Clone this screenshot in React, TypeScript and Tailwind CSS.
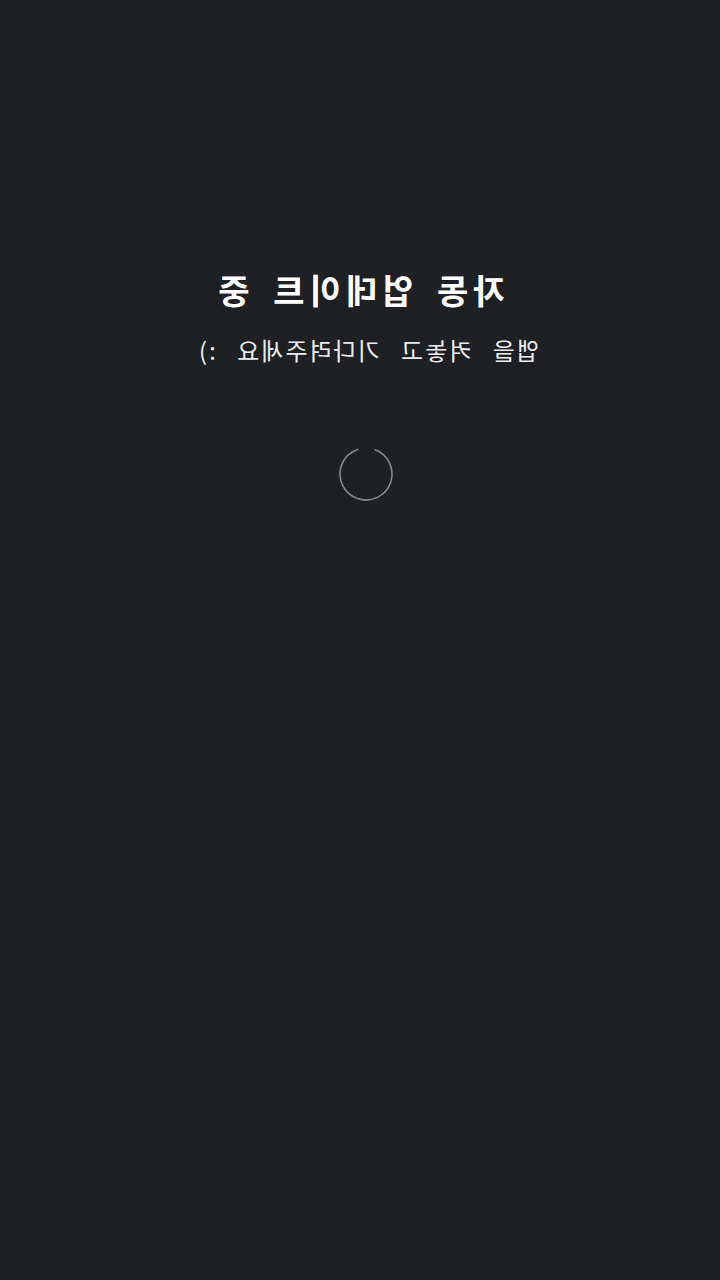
export default function App() {
  return (
    <div
      className="flex min-h-[1280px] w-full flex-col items-center bg-[#1f2024] text-white"
      style={{ fontFamily: '"Noto Sans CJK KR", "Noto Sans", sans-serif' }}
    >
      <div className="flex -scale-x-100 flex-col items-center pt-[263px]">
        <h1 className="pl-[2px] text-[34px] font-semibold leading-[54px] tracking-[5px] [word-spacing:6px]">
          자동 업데이트 중
        </h1>
        <p className="mt-[15px] pr-[16px] text-[24px] leading-[36px] tracking-[2px] text-[#ececec] [word-spacing:12px]">
          앱을 켜놓고 기다려주세요 :)
        </p>
      </div>
      <svg className="ml-[12px] mt-[78px]" width="56" height="56" viewBox="0 0 56 56">
        <circle
          cx="28"
          cy="28"
          r="26"
          fill="none"
          stroke="#85868a"
          strokeWidth="1.6"
          strokeDasharray="146 17"
          transform="rotate(-71 28 28)"
        />
      </svg>
    </div>
  )
}
